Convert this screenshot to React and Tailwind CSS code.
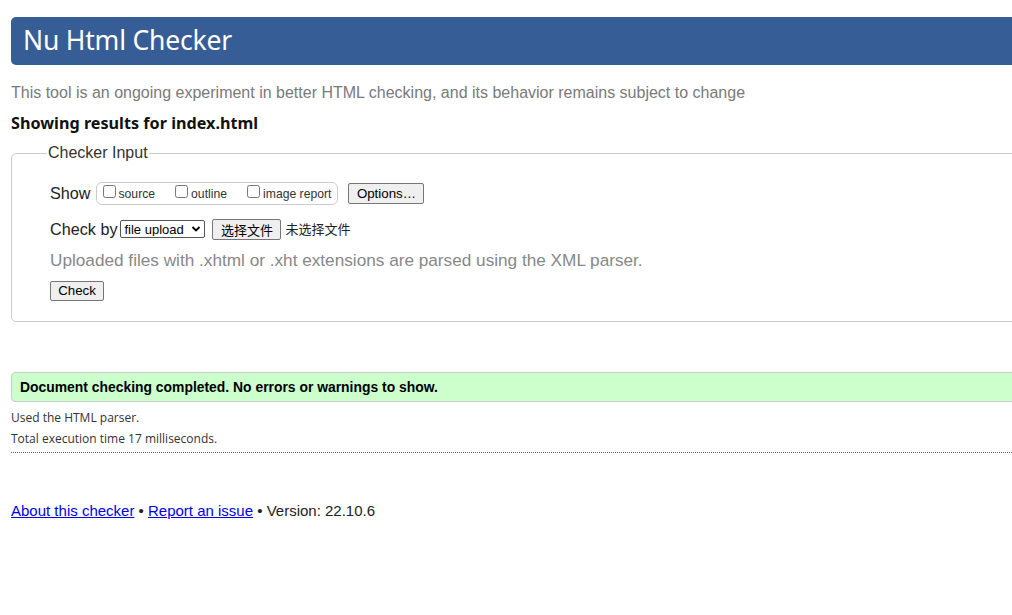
import React from "react";

const arial = { fontFamily: '"Liberation Sans", Arial, sans-serif' };

function Check({ label }) {
  return (
    <label className="flex items-center">
      <input type="checkbox" className="m-0 mr-[3px] h-[13px] w-[13px] -translate-y-[1px]" />
      <span className="text-[12.2px] text-[#333] translate-y-[1px]">{label}</span>
    </label>
  );
}

export default function App() {
  return (
    <div className="w-[1012px] h-[615px] overflow-hidden bg-white" style={arial}>
      <div className="w-[1100px] pl-[11px] pt-[17px]">
        <header className="h-[48px] rounded-l-[5px] bg-[#365d95] flex items-center pl-[12px]">
          <h1 className="text-white text-[26.5px] leading-none font-['Noto_Sans',sans-serif] tracking-[-0.2px] -translate-y-[1px]">
            Nu Html Checker
          </h1>
        </header>

        <p className="mt-[18px] text-[16px] leading-[20px] text-[#7a7a7a]">
          This tool is an ongoing experiment in better HTML checking, and its behavior remains subject to change
        </p>

        <p className="mt-[10px] text-[16.2px] leading-[20px] font-bold text-[#111] font-['Noto_Sans',sans-serif]">
          Showing results for index.html
        </p>

        <fieldset className="mt-[8px] border border-[#ccc] rounded-l-[5px] pl-[38px] pr-2 pt-[16px] pb-[20px] m-0">
          <legend className="ml-[-3px] px-[1px] text-[16px] text-[#333]">Checker Input</legend>

          <div className="flex items-center h-[24px]">
            <span className="text-[16.2px] text-[#222] mr-[5px]">Show</span>
            <div className="flex items-center h-[23px] border border-[#ccc] rounded-[6px] pl-[6px] pr-[6px] gap-[20px]">
              <Check label="source" />
              <Check label="outline" />
              <Check label="image report" />
            </div>
            <button className="ml-[10px] h-[21px] w-[76px] bg-[#efefef] border border-[#767676] rounded-[2px] text-[13.3px] text-black leading-none pt-[1px]">
              Options…
            </button>
          </div>

          <div className="flex items-center h-[24px] mt-[12px]">
            <span className="text-[16.2px] text-[#222] mr-[3px]">Check by</span>
            <div className="flex items-center h-[18px] w-[85px] border border-[#555] rounded-[2px] bg-white pl-[3px] pr-[3px]">
              <select className="appearance-none bg-transparent border-0 outline-none text-[13px] text-black leading-none flex-1 p-0">
                <option>file upload</option>
              </select>
              <svg width="10" height="8" viewBox="0 0 10 8" className="shrink-0">
                <path d="M1.5 2 L5 5.5 L8.5 2" stroke="#000" strokeWidth="1.8" fill="none" />
              </svg>
            </div>
            <button className="ml-[7px] h-[21px] w-[69px] bg-[#efefef] border border-[#767676] rounded-[2px] text-[13px] text-black leading-none font-['Noto_Sans_CJK_SC',sans-serif]">
              选择文件
            </button>
            <span className="ml-[4px] text-[13px] text-[#222] font-['Noto_Sans_CJK_SC',sans-serif]">未选择文件</span>
          </div>

          <p className="mt-[9px] text-[17.2px] leading-[20px] text-[#888]">
            Uploaded files with .xhtml or .xht extensions are parsed using the XML parser.
          </p>

          <button className="mt-[11px] h-[20px] w-[54px] bg-[#efefef] border border-[#767676] rounded-[2px] text-[13.3px] text-black leading-none block">
            Check
          </button>
        </fieldset>

        <div className="mt-[50px] h-[30px] bg-[#ccffcc] border border-[#ccc] rounded-l-[4px] flex items-center pl-[8px]">
          <span className="text-[13.9px] font-bold text-black">
            Document checking completed. No errors or warnings to show.
          </span>
        </div>

        <p className="mt-[5px] text-[12px] leading-[21px] text-[#333] font-['Open_Sans',sans-serif]">Used the HTML parser.</p>
        <p className="text-[12px] leading-[21px] text-[#333] font-['Open_Sans',sans-serif]">Total execution time 17 milliseconds.</p>
        <div className="mt-[3px] border-t border-dotted border-[#666]"></div>

        <p className="mt-[47px] text-[15px] text-[#222]">
          <a href="#" className="text-[#0000ee] underline">About this checker</a>
          {" • "}
          <a href="#" className="text-[#0000ee] underline">Report an issue</a>
          {" • Version: 22.10.6"}
        </p>
      </div>
    </div>
  );
}
